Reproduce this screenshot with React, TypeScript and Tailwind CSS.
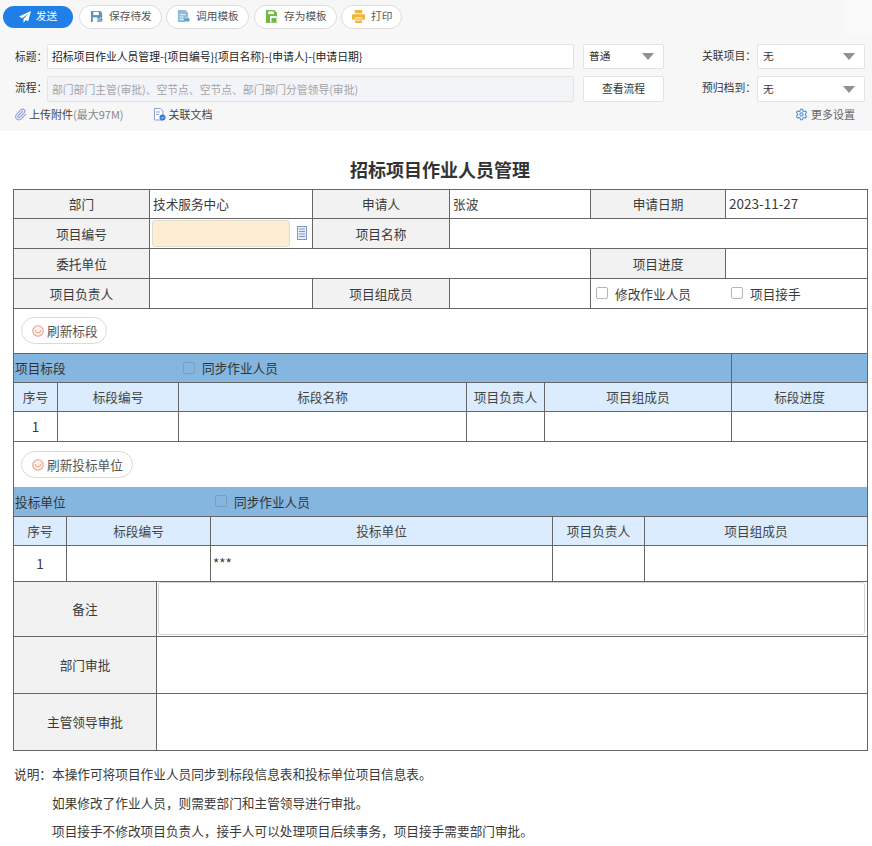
import type { ReactNode } from "react";
import { Paperclip, Settings } from "lucide-react";

const FONT = "font-['Microsoft_YaHei','Noto_Sans_CJK_SC','Noto_Sans',sans-serif]";
const COMMA = "\uFF0C";
const COLON = "\uFF1A";

function Triangle() {
  return (
    <svg width="12" height="7" viewBox="0 0 12 7" className="shrink-0">
      <path d="M0 0h12L6 7z" fill="#8f8f94" />
    </svg>
  );
}

function SaveIcon() {
  return (
    <svg width="13" height="13" viewBox="0 0 14 14">
      <path d="M1 1h10l2 2v10H1z" fill="#5b93b5" />
      <rect x="3.5" y="2" width="6" height="3.5" fill="#fff" />
      <rect x="3" y="8" width="5" height="5" fill="#fff" />
      <path d="M9 9.5h2.5V7.8L14 10.5l-2.5 2.7v-1.7H9z" fill="#5b93b5" stroke="#fff" strokeWidth=".5" />
    </svg>
  );
}

function TemplateIcon() {
  return (
    <svg width="13" height="13" viewBox="0 0 14 14">
      <path d="M1 0h8l3 3v5H9v5H1z" fill="#8dbcd8" />
      <path d="M3 5h6M3 7.5h4M3 10h4" stroke="#fff" strokeWidth="1" />
      <path d="M8 9h3.5V7.5L14 10.5l-2.5 3V12H8z" fill="#5f9fc4" />
    </svg>
  );
}

function SaveTemplateIcon() {
  return (
    <svg width="13" height="13" viewBox="0 0 14 14">
      <path d="M1 0h9l3 3v11H1z" fill="#72b845" />
      <rect x="3.5" y="1.5" width="6" height="3" fill="#fff" />
      <rect x="5.5" y="6.5" width="7" height="7" fill="#fff" />
      <rect x="7" y="8.5" width="5" height="5" fill="#72b845" />
    </svg>
  );
}

function PrintIcon() {
  return (
    <svg width="13" height="13" viewBox="0 0 14 14">
      <rect x="3" y="0" width="8" height="3.5" fill="#f5b335" />
      <rect x="0" y="4.5" width="14" height="6" rx="1" fill="#f5b335" />
      <rect x="3" y="8" width="8" height="6" fill="#fff" />
      <rect x="3.5" y="9" width="7" height="5" fill="#f5b335" />
      <path d="M4.5 11h5" stroke="#fff" />
    </svg>
  );
}

function DocIcon() {
  return (
    <svg width="13" height="13" viewBox="0 0 13 13">
      <path d="M1.5.5h6l2.5 2.5v9h-8.500z" fill="#fff" stroke="#8f9fdc" />
      <path d="M3 4h4M3 6.500h3" stroke="#8f9fdc" />
      <circle cx="9.500" cy="9.500" r="3" fill="#3478d8" />
      <path d="M8.300 9.500l1 1 1.500-1.700" stroke="#fff" fill="none" strokeWidth=".8" />
    </svg>
  );
}

function FaceIcon() {
  return (
    <svg width="12" height="12" viewBox="0 0 12 12">
      <circle cx="6" cy="6" r="5.200" fill="#fdf3ef" stroke="#ee9a80" strokeWidth="1.100" />
      <path d="M3.700 5v1.800c0 .6.400.9 1 .9h2.600c.6 0 1-.3 1-.9V5" fill="none" stroke="#ee9a80" />
    </svg>
  );
}

function ToolBtn({ icon, label, className }: { icon: ReactNode; label: string; className: string }) {
  return (
    <div
      className={`flex h-[24px] items-center gap-[6px] rounded-full border border-[#dcdcdc] bg-white pb-px pl-[10px] text-[10.7px] text-[#555] ${className}`}
    >
      {icon}
      <span>{label}</span>
    </div>
  );
}

function SelectBox({ value, className }: { value: string; className: string }) {
  return (
    <div
      className={`flex items-center justify-between rounded-[2px] border border-[#e3e3e6] bg-white pl-[5px] pr-[9px] text-[10.7px] text-[#333] ${className}`}
    >
      <span>{value}</span>
      <Triangle />
    </div>
  );
}

function Label({ children }: { children?: ReactNode }) {
  return (
    <div className="flex items-center justify-center border-r border-b border-[#666] bg-[#f2f2f2] pb-px text-[12.67px] text-[#3a3a3a]">
      {children}
    </div>
  );
}

function Value({
  children,
  className = "",
  pad = "pl-[3px]",
}: {
  children?: ReactNode;
  className?: string;
  pad?: string;
}) {
  return (
    <div className={`flex items-center border-r border-b border-[#666] bg-white pb-px text-[#3a3a3a] ${pad} ${className || "text-[12.67px]"}`}>
      {children}
    </div>
  );
}

function Head({ children }: { children: ReactNode }) {
  return (
    <div className="flex items-center justify-center border-r border-b border-[#666] bg-[#daecfd] pb-px text-[12.67px] text-[#444]">
      {children}
    </div>
  );
}

function Check({ className = "border-[#b5b5b5] bg-white" }: { className?: string }) {
  return <span className={`inline-block h-[12px] w-[12px] shrink-0 rounded-[2px] border ${className}`} />;
}

function RefreshButton({ label, className }: { label: string; className: string }) {
  return (
    <div
      className={`flex h-[27px] items-center gap-[3px] rounded-full border border-[#d9d9d9] bg-white pl-[10px] text-[12.67px] text-[#555] ${className}`}
    >
      <FaceIcon />
      <span>{label}</span>
    </div>
  );
}

export default function App() {
  return (
    <div className={`${FONT} h-[846px] w-[872px] overflow-hidden bg-white text-[#333]`}>
      <div className="relative h-[131px] bg-[#f7f7f8] pt-[5px]">
        <div className="absolute right-0 top-0 h-[35px] w-[29px] bg-[#f9f9f9]" />

        <div className="flex items-center pl-[3px]">
          <div className="flex h-[22px] w-[70px] items-center justify-center gap-[5px] rounded-full bg-[#1f7fe6] pb-px text-[10.7px] text-white">
            <svg width="12" height="12" viewBox="0 0 12 12">
              <path d="M12 0L0 5.500l3.200 1.700L9.500 2.500 4.500 8v4l2.300-3 2.400 1.200z" fill="#fff" />
            </svg>
            <span>发送</span>
          </div>
          <ToolBtn icon={<SaveIcon />} label="保存待发" className="ml-[6px] w-[83px]" />
          <ToolBtn icon={<TemplateIcon />} label="调用模板" className="ml-[4px] w-[83px]" />
          <ToolBtn icon={<SaveTemplateIcon />} label="存为模板" className="ml-[5px] w-[83px]" />
          <ToolBtn icon={<PrintIcon />} label="打印" className="ml-[4px] w-[61px]" />
        </div>

        <div className="mt-[15px] flex items-center pl-[15px] text-[10.8px]">
          <span className="w-[32px] whitespace-nowrap pb-px">标题{COLON}</span>
          <div className="flex h-[25px] w-[527px] items-center rounded-[2px] border border-[#e3e3e6] bg-white pl-[4px] text-[#222]">
            招标项目作业人员管理-{"{"}项目编号{"}"}{"{"}项目名称{"}"}-{"{"}申请人{"}"}-{"{"}申请日期{"}"}
          </div>
          <SelectBox value="普通" className="ml-[9px] h-[25px] w-[81px]" />
          <span className="ml-[38px] w-[55px] whitespace-nowrap pb-[2px]">关联项目{COLON}</span>
          <SelectBox value="无" className="h-[25px] w-[108px]" />
        </div>

        <div className="mt-[7px] flex items-center pl-[15px] text-[10.8px]">
          <span className="w-[32px] whitespace-nowrap pb-[3px]">流程{COLON}</span>
          <div className="flex h-[26px] w-[527px] items-center rounded-[2px] border border-[#e3e3e6] bg-[#f3f4f8] pl-[4px] text-[#a3a3a8]">
            部门部门主管(审批)、空节点、空节点、部门部门分管领导(审批)
          </div>
          <div className="ml-[9px] flex h-[26px] w-[81px] items-center justify-center rounded-[2px] border border-[#e3e3e6] bg-white pb-[2px]">
            查看流程
          </div>
          <span className="ml-[38px] w-[55px] whitespace-nowrap pb-[3px]">预归档到{COLON}</span>
          <SelectBox value="无" className="h-[26px] w-[108px]" />
        </div>

        <div className="mt-[4px] flex items-center pl-[14px] pr-[17px] text-[11px] text-[#444]">
          <Paperclip size={13} color="#8f9fdc" />
          <span className="ml-[2px]">上传附件</span>
          <span className="text-[#888]">(最大97M)</span>
          <span className="ml-[29px]">
            <DocIcon />
          </span>
          <span className="ml-[3px]">关联文档</span>
          <Settings size={13} color="#4a90e2" className="ml-auto" />
          <span className="ml-[3px] text-[#666]">更多设置</span>
        </div>
      </div>

      <h1 className="mt-[25px] h-[33px] pl-[8px] text-center text-[18px] font-bold leading-[27px] text-[#333]">
        招标项目作业人员管理
      </h1>

      <div className="ml-[13px] w-[855px] border-l border-t border-[#666]">
        <div className="grid h-[29px] grid-cols-[136px_163px_137px_141px_135px_142px]">
          <Label>部门</Label>
          <Value>技术服务中心</Value>
          <Label>申请人</Label>
          <Value>张波</Value>
          <Label>申请日期</Label>
          <Value className="text-[13.5px]">2023-11-27</Value>
        </div>
        <div className="grid h-[30px] grid-cols-[136px_163px_137px_141px_135px_142px]">
          <Label>项目编号</Label>
          <Value pad="pl-[2px]" className="gap-[7px] text-[12.67px]">
            <div className="h-[27px] w-[138px] rounded-[3px] border border-[#e0dccf] bg-[#fdeed3]" />
            <svg width="10" height="14" viewBox="0 0 10 14">
              <rect x=".5" y=".5" width="9" height="13" fill="#e8edf8" stroke="#7f95cf" />
              <path d="M2 3h6M2 5.500h6M2 8h6M2 10.500h6" stroke="#7f95cf" />
            </svg>
          </Value>
          <Label>项目名称</Label>
          <Value className="col-span-3" />
        </div>
        <div className="grid h-[30px] grid-cols-[136px_163px_137px_141px_135px_142px]">
          <Label>委托单位</Label>
          <Value className="col-span-3" />
          <Label>项目进度</Label>
          <Value />
        </div>
        <div className="grid h-[30px] grid-cols-[136px_163px_137px_141px_135px_142px]">
          <Label>项目负责人</Label>
          <Value />
          <Label>项目组成员</Label>
          <Value />
          <Value pad="pl-[5px]" className="col-span-2 text-[12.67px]">
            <Check />
            <span className="ml-[7px] w-[116px]">修改作业人员</span>
            <Check />
            <span className="ml-[7px]">项目接手</span>
          </Value>
        </div>

        <div className="flex h-[45px] items-start border-r border-b border-[#666] pl-[7px] pt-[8px]">
          <RefreshButton label="刷新标段" className="w-[86px]" />
        </div>

        <div className="grid h-[29px] grid-cols-[718px_136px] bg-[#85b6e0]">
          <div className="flex items-center border-r border-b border-[#666] pb-px pl-px text-[12.67px]">
            <span className="w-[168px]">项目标段</span>
            <Check className="border-[#7a9dbd] bg-[#85b6e0]" />
            <span className="ml-[7px]">同步作业人员</span>
          </div>
          <div className="border-r border-b border-[#666]" />
        </div>
        <div className="grid h-[29px] grid-cols-[44px_121px_288px_78px_187px_136px]">
          <Head>序号</Head>
          <Head>标段编号</Head>
          <Head>标段名称</Head>
          <Head>项目负责人</Head>
          <Head>项目组成员</Head>
          <Head>标段进度</Head>
        </div>
        <div className="grid h-[30px] grid-cols-[44px_121px_288px_78px_187px_136px]">
          <Value pad="pl-0" className="justify-center text-[13.5px]">1</Value>
          <Value />
          <Value />
          <Value />
          <Value />
          <Value />
        </div>

        <div className="h-[45px] border-r border-[#666] pl-[7px] pt-[9px]">
          <RefreshButton label="刷新投标单位" className="w-[112px]" />
        </div>

        <div className="flex h-[30px] items-center border-r border-b border-[#666] bg-[#85b6e0] pb-px pl-px text-[12.67px]">
          <span className="w-[200px]">投标单位</span>
          <Check className="border-[#7a9dbd] bg-[#85b6e0]" />
          <span className="ml-[7px]">同步作业人员</span>
        </div>
        <div className="grid h-[29px] grid-cols-[53px_144px_342px_92px_223px]">
          <Head>序号</Head>
          <Head>标段编号</Head>
          <Head>投标单位</Head>
          <Head>项目负责人</Head>
          <Head>项目组成员</Head>
        </div>
        <div className="grid h-[36px] grid-cols-[53px_144px_342px_92px_223px]">
          <Value pad="pl-0" className="justify-center text-[13.5px]">1</Value>
          <Value />
          <Value pad="pl-[2px]" className="text-[13.5px]">***</Value>
          <Value />
          <Value />
        </div>

        <div className="grid h-[55px] grid-cols-[143px_711px]">
          <Label>备注</Label>
          <Value pad="pl-[1px]">
            <div className="h-[53px] w-[707px] rounded-[3px] border border-[#d4d4d4] bg-white" />
          </Value>
        </div>
        <div className="grid h-[57px] grid-cols-[143px_711px]">
          <Label>部门审批</Label>
          <Value />
        </div>
        <div className="grid h-[57px] grid-cols-[143px_711px]">
          <Label>主管领导审批</Label>
          <Value />
        </div>
      </div>

      <div className="mt-[9px] pl-[14px] text-[12.67px] leading-[28.5px] text-[#3a3a3a]">
        <div className="flex">
          <span className="w-[38px]">说明{COLON}</span>
          <span>本操作可将项目作业人员同步到标段信息表和投标单位项目信息表。</span>
        </div>
        <p className="pl-[38px]">如果修改了作业人员{COMMA}则需要部门和主管领导进行审批。</p>
        <p className="pl-[38px]">项目接手不修改项目负责人{COMMA}接手人可以处理项目后续事务{COMMA}项目接手需要部门审批。</p>
      </div>
    </div>
  );
}
